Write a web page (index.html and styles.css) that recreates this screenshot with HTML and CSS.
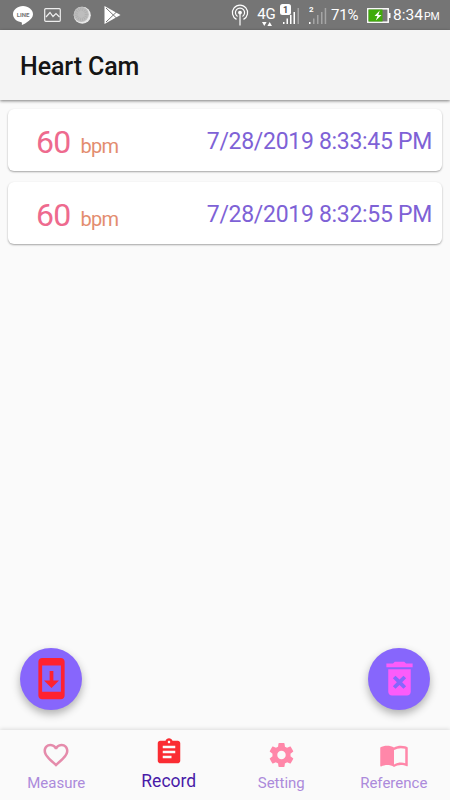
FILE: index.html
```html
<!DOCTYPE html>
<html lang="en">
<head>
    <meta charset="UTF-8">
    <meta name="viewport" content="width=device-width, initial-scale=1.0">
    <title>Heart Cam</title>
    <link rel="stylesheet" href="styles.css">
</head>
<body>
    <div class="status-bar">
        <div class="status-left">
            <svg class="icon-line" width="20" height="19" viewBox="0 0 20 19">
                <path fill="#fff" d="M10 0C4.500 0 0 3.700 0 8.200c0 4 3.500 7.300 8.300 8 .9.200.6 1.400.5 2.400 0 .4.300.4.700.2C12 17.500 20 13.500 20 8.200 20 3.700 15.500 0 10 0z"/>
                <text x="10" y="10.700" text-anchor="middle">LINE</text>
            </svg>
            <svg class="icon-photo" width="17" height="14" viewBox="0 0 17 14" fill="none" stroke="#eee" stroke-width="1.200">
                <rect x=".7" y=".7" width="15.600" height="12.600" rx="1"/>
                <path d="M2 9l4-4.500 3 4 3-3 3.500 3.500"/>
            </svg>
            <svg class="icon-disc" width="18" height="18" viewBox="0 0 18 18">
                <circle cx="9.300" cy="9.300" r="8.500" fill="#e8e8e8"/>
                <circle cx="8.300" cy="8.300" r="7.600" fill="#bdbdbd"/>
                <circle cx="8.300" cy="8.300" r="5" fill="none" stroke="#b0b0b0" stroke-width="3" stroke-dasharray="1 1"/>
            </svg>
            <svg class="icon-play" width="17" height="18" viewBox="0 0 17 18">
                <path fill="#fff" d="M.5 0L16.500 9 .5 18z"/>
                <path stroke="#757575" stroke-width="1" fill="none" d="M2 2l11 10.500M2 16L13 5.500"/>
            </svg>
        </div>
        <div class="status-right">
            <svg class="icon-cast" width="18" height="22" viewBox="0 0 18 22" fill="none" stroke="#fff" stroke-width="1.200">
                <path d="M5.500 15.400a7.600 7.600 0 1 1 7 0M6.500 12.500a4.600 4.600 0 1 1 5 0"/>
                <circle cx="9" cy="8.600" r="1.300" fill="#fff"/>
                <path d="M9 9v12.500"/>
            </svg>
            <div class="network">
                <span>4G</span>
                <svg width="10" height="4" viewBox="0 0 10 4"><path fill="#fff" d="M0 0h4.600L2.300 4zM5.400 4H10L7.700 0z"/></svg>
            </div>
            <svg class="signal" width="20" height="20" viewBox="0 0 20 20">
                <path fill="#fff" d="M3 18h1.500v2H3zM6.500 14.500H8V20H6.500zM10 11h1.500v9H10zM13.500 8H15v12h-1.500z"/>
                <path fill="#a5a5a5" d="M17.500 4H19v16h-1.500z"/>
                <rect width="11" height="11" rx="2.500" fill="#fff"/>
                <text class="sim-one" x="5.500" y="8.700" text-anchor="middle">1</text>
            </svg>
            <svg class="signal-two" width="18" height="20" viewBox="0 0 18 20">
                <path fill="#fff" d="M0 18h1.500v2H0z"/>
                <path fill="#a5a5a5" d="M4 14.500h1.500V20H4zM8 11h1.500v9H8zM12 8h1.500v12H12zM15.700 4h1.500v16h-1.500z"/>
                <text class="sim-two" x="0" y="8">2</text>
            </svg>
            <span class="percent">71%</span>
            <svg class="battery" width="24" height="15" viewBox="0 0 24 15">
                <rect x=".8" y=".8" width="20.400" height="13.400" fill="#757575" stroke="#fff" stroke-width="1.500"/>
                <path fill="#40ab0a" d="M1.500 1.500h14v12h-14z"/>
                <path fill="#fff" d="M21.500 5H23.500v5h-2zM12.800 2.500L7.500 8h3l-1.700 4.500L14.500 7h-3.200z"/>
            </svg>
            <span class="clock">8:34</span>
            <span class="period">PM</span>
        </div>
    </div>

    <header>
        <h1>Heart Cam</h1>
    </header>

    <main>
        <div class="record">
            <span class="rate">60</span>
            <span class="unit">bpm</span>
            <span class="date">7/28/2019 8:33:45 PM</span>
        </div>
        <div class="record">
            <span class="rate">60</span>
            <span class="unit">bpm</span>
            <span class="date">7/28/2019 8:32:55 PM</span>
        </div>
        <div class="actions">
            <button class="fab save" aria-label="Save">
                <svg width="45" height="45" viewBox="0 0 24 24"><path d="M17 1.010L7 1c-1.100 0-2 .9-2 2v18c0 1.100.9 2 2 2h10c1.100 0 2-.9 2-2V3c0-1.100-.9-1.990-2-1.990zM17 19H7V5h10v14zm-1-6h-3V8h-2v5H8l4 4 4-4z"/></svg>
            </button>
            <button class="fab delete" aria-label="Delete">
                <svg width="45" height="45" viewBox="0 0 24 24"><path d="M6 19c0 1.100.9 2 2 2h8c1.100 0 2-.9 2-2V7H6v12zm2.460-7.120l1.410-1.410L12 12.590l2.120-2.120 1.410 1.410L13.410 14l2.120 2.120-1.410 1.410L12 15.410l-2.120 2.120-1.410-1.410L10.590 14l-2.130-2.120zM15.500 4l-1-1h-5l-1 1H5v2h14V4z"/></svg>
            </button>
        </div>
    </main>

    <nav>
        <a class="tab measure">
            <svg width="30" height="30" viewBox="0 0 24 24"><path d="M16.500 3c-1.740 0-3.410.81-4.500 2.090C10.910 3.810 9.240 3 7.500 3 4.420 3 2 5.420 2 8.500c0 3.780 3.400 6.860 8.550 11.540L12 21.350l1.450-1.320C18.600 15.360 22 12.280 22 8.500 22 5.420 19.580 3 16.500 3zm-4.400 15.550l-.1.100-.1-.1C7.140 14.240 4 11.390 4 8.500 4 6.500 5.500 5 7.500 5c1.540 0 3.040.99 3.570 2.360h1.870C13.460 5.990 14.960 5 16.500 5c2 0 3.500 1.500 3.500 3.500 0 2.890-3.140 5.740-7.900 10.050z"/></svg>
            <span>Measure</span>
        </a>
        <a class="tab active">
            <svg width="30" height="30" viewBox="0 0 24 24"><path d="M19 3h-4.180C14.400 1.840 13.300 1 12 1c-1.300 0-2.400.84-2.820 2H5c-1.100 0-2 .9-2 2v14c0 1.100.9 2 2 2h14c1.100 0 2-.9 2-2V5c0-1.100-.9-2-2-2zm-7 0c.55 0 1 .45 1 1s-.45 1-1 1-1-.45-1-1 .45-1 1-1zm2 14H7v-2h7v2zm3-4H7v-2h10v2zm0-4H7V7h10v2z"/></svg>
            <span>Record</span>
        </a>
        <a class="tab">
            <svg width="29" height="30" viewBox="0 0 24 24"><path d="M19.430 12.980c.04-.32.07-.64.07-.98s-.03-.66-.07-.98l2.110-1.650c.19-.15.24-.42.12-.64l-2-3.460c-.12-.22-.39-.3-.61-.22l-2.490 1c-.52-.4-1.080-.73-1.690-.98l-.38-2.650C14.460 2.180 14.250 2 14 2h-4c-.25 0-.46.18-.49.42l-.38 2.650c-.61.25-1.170.59-1.690.98l-2.490-1c-.23-.09-.49 0-.61.22l-2 3.460c-.13.22-.07.49.12.64l2.110 1.650c-.04.32-.07.65-.07.98s.03.66.07.98l-2.110 1.650c-.19.15-.24.42-.12.64l2 3.460c.12.22.39.3.61.22l2.490-1c.52.4 1.080.73 1.690.98l.38 2.650c.03.24.24.42.49.42h4c.25 0 .46-.18.49-.42l.38-2.650c.61-.25 1.170-.59 1.690-.98l2.490 1c.23.09.49 0 .61-.22l2-3.460c.12-.22.07-.49-.12-.64l-2.110-1.650zM12 15.500c-1.930 0-3.500-1.570-3.500-3.500s1.570-3.500 3.500-3.500 3.500 1.570 3.500 3.500-1.570 3.500-3.500 3.500z"/></svg>
            <span>Setting</span>
        </a>
        <a class="tab">
            <svg width="30" height="30" viewBox="0 0 24 24"><path d="M21 5c-1.110-.35-2.330-.5-3.500-.5-1.950 0-4.050.4-5.500 1.500-1.450-1.100-3.550-1.500-5.500-1.500S2.450 4.900 1 6v14.650c0 .25.25.5.5.5.1 0 .15-.05.25-.05C3.100 20.450 5.050 20 6.500 20c1.950 0 4.050.4 5.500 1.500 1.350-.85 3.800-1.500 5.500-1.500 1.650 0 3.350.3 4.750 1.050.1.050.15.050.25.050.25 0 .5-.25.5-.5V6c-.6-.45-1.250-.75-2-1zm0 13.500c-1.100-.35-2.300-.5-3.500-.5-1.700 0-4.150.65-5.500 1.500V8c1.350-.85 3.800-1.500 5.500-1.500 1.200 0 2.400.15 3.500.5v11.500z"/></svg>
            <span>Reference</span>
        </a>
    </nav>
</body>
</html>
```
FILE: styles.css
```css
* {
    box-sizing: border-box;
}
body {
    margin: 0;
    height: 800px;
    display: flex;
    flex-direction: column;
    overflow: hidden;
    font-family: Roboto, sans-serif;
    background-color: #fafafa;
}
svg {
    display: block;
    flex-shrink: 0;
}

/* status bar */
.status-bar {
    height: 30px;
    padding: 0 10px 0 13px;
    display: flex;
    justify-content: space-between;
    background-color: #757575;
    color: white;
}
.status-left,
.status-right {
    display: flex;
    align-items: center;
    white-space: nowrap;
}
.icon-line text {
    font-size: 6px;
    font-weight: 700;
    fill: #757575;
}
.icon-photo {
    margin-left: 11px;
}
.icon-disc {
    margin-left: 12px;
}
.icon-play {
    margin-left: 13px;
}
.icon-cast {
    margin-right: 8px;
}
.network {
    width: 19px;
    margin-right: 4px;
    display: flex;
    flex-direction: column;
    align-items: center;
    font-size: 15px;
    line-height: 15px;
    padding-top: 3px;
}
.signal {
    margin-right: 9px;
    margin-top: -2px;
}
.sim-one {
    font-size: 9px;
    font-weight: 700;
    fill: #555;
}
.signal-two {
    margin-right: 4px;
    margin-top: -2px;
}
.sim-two {
    font-size: 8px;
    font-weight: 700;
    fill: white;
}
.percent {
    width: 27px;
    margin-right: 9px;
    font-size: 15px;
    letter-spacing: -0.2px;
}
.battery {
    margin-right: 2px;
}
.clock {
    width: 30px;
    font-size: 15.5px;
}
.period {
    width: 16px;
    margin-left: 1px;
    padding-top: 3px;
    font-size: 10.5px;
}

header {
    height: 70px;
    padding: 1px 20px 0;
    display: flex;
    align-items: center;
    background-color: #f4f4f4;
    box-shadow: 0 1px 3px rgba(0, 0, 0, 0.5);
}
h1 {
    margin: 0;
    padding-top: 2px;
    font-size: 25px;
    font-weight: 500;
    letter-spacing: -0.1px;
    color: #151515;
}

/* records */
main {
    flex: 1;
    padding: 9px 8px 20px;
    display: flex;
    flex-direction: column;
    gap: 11px;
}
.record {
    height: 62px;
    padding: 0 10px 0 28px;
    display: flex;
    align-items: center;
    background-color: white;
    border-radius: 6px;
    box-shadow: 0 1px 2px rgba(0, 0, 0, 0.35);
}
.rate {
    padding-top: 3px;
    font-size: 32px;
    letter-spacing: -0.8px;
    color: #ee6a8e;
}
.unit {
    margin-left: 10px;
    padding-top: 11px;
    font-size: 20px;
    letter-spacing: -0.7px;
    color: #e38d70;
}
.date {
    margin-left: auto;
    padding-top: 2px;
    font-size: 23px;
    letter-spacing: -0.3px;
    color: #7e62d6;
}
.actions {
    margin-top: auto;
    padding: 0 12px;
    display: flex;
    justify-content: space-between;
}
.fab {
    width: 62px;
    height: 62px;
    padding: 0;
    border: none;
    border-radius: 50%;
    display: flex;
    align-items: center;
    justify-content: center;
    background-color: #8766fc;
    box-shadow: 0 4px 9px rgba(0, 0, 0, 0.3);
}
.fab svg {
    margin-bottom: 1px;
}
.save {
    fill: #ff2230;
}
.delete {
    fill: #fc5cfa;
}

/* bottom tabs */
nav {
    height: 70px;
    display: flex;
    background-color: #fafafa;
    box-shadow: 0 -1px 4px rgba(0, 0, 0, 0.12);
}
.tab {
    flex: 1;
    padding-top: 10px;
    display: flex;
    flex-direction: column;
    align-items: center;
    gap: 4px;
    font-size: 15px;
    line-height: 18px;
    color: #ac8adb;
    fill: #ff87a9;
}
.measure {
    fill: #e58bab;
}
.active {
    padding-top: 7px;
    font-size: 17.5px;
    line-height: 20px;
    color: #481ba8;
    fill: #fa2c32;
}
```
